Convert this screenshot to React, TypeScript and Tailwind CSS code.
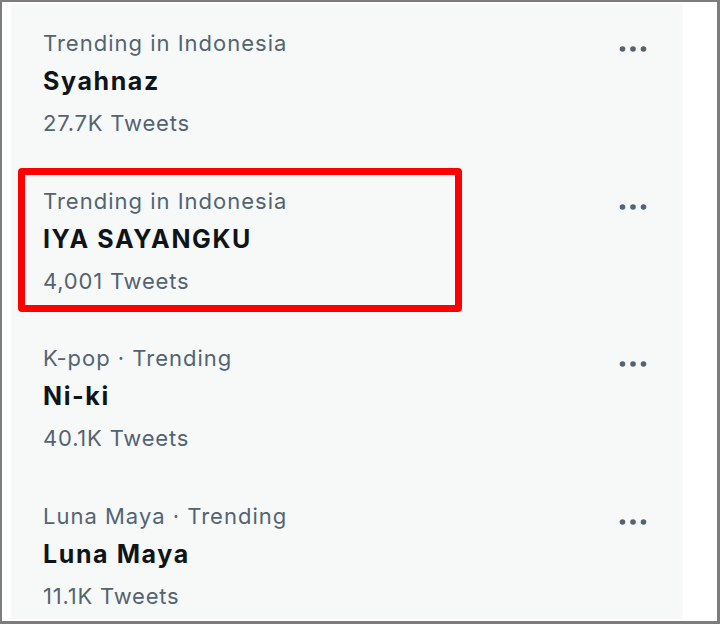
const trends = [
  { context: "Trending in Indonesia", title: "Syahnaz", count: "27.7K Tweets" },
  { context: "Trending in Indonesia", title: "IYA SAYANGKU", count: "4,001 Tweets" },
  { context: "K-pop · Trending", title: "Ni-ki", count: "40.1K Tweets" },
  { context: "Luna Maya · Trending", title: "Luna Maya", count: "11.1K Tweets" },
];

function Dots() {
  return (
    <svg width="30" height="10" viewBox="0 0 30 10" fill="#536471">
      <circle cx="4.5" cy="5" r="2.8" />
      <circle cx="15" cy="5" r="2.8" />
      <circle cx="25.5" cy="5" r="2.8" />
    </svg>
  );
}

function TrendRow({ context, title, count }: { context: string; title: string; count: string }) {
  return (
    <div className="flex h-[157.5px] shrink-0 pl-[32px] pr-[35px] pt-[25px]">
      <div className="flex flex-1 flex-col">
        <div className="text-[22px] leading-[28px] tracking-[1px] text-[#536471]">{context}</div>
        <div className="text-[25px] font-bold leading-[48px] tracking-[1.6px] text-[#0f1419]">{title}</div>
        <div className="text-[22px] leading-[36px] tracking-[0.8px] text-[#536471]">{count}</div>
      </div>
      <div className="pt-[15px]">
        <Dots />
      </div>
    </div>
  );
}

export default function App() {
  return (
    <div
      className="h-[624px] w-[720px] overflow-hidden border-t-2 border-r-[3px] border-b-[3px] border-l-2 border-[#7d7d7d] bg-white pt-[2px] pr-[34px] pb-[2px] pl-[9px]"
      style={{ fontFamily: "Inter, 'Noto Sans', sans-serif" }}
    >
      <div className="relative flex h-full flex-col bg-[#f7f9f9]">
        {trends.map((t, i) => (
          <TrendRow key={i} {...t} />
        ))}
        {/* red highlight around second trend */}
        <div className="pointer-events-none absolute left-[7px] top-[164px] h-[144px] w-[444px] rounded-[4px] border-[7px] border-[#ff0000]" />
      </div>
    </div>
  );
}
